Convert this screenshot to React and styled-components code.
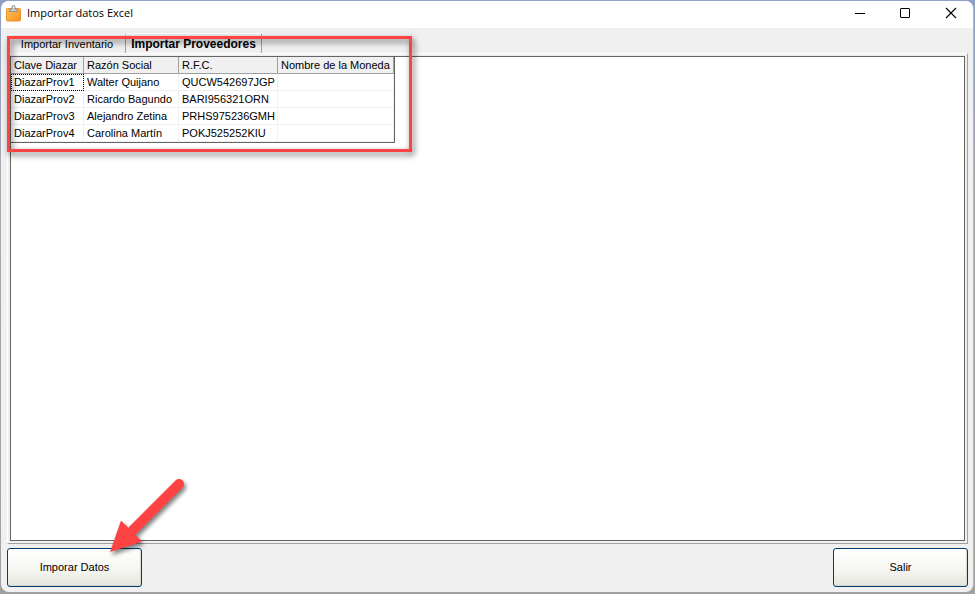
import { useState } from "react";
import styled, { createGlobalStyle } from "styled-components";

const GlobalStyle = createGlobalStyle`
  * {
    box-sizing: border-box;
  }

  body {
    margin: 0;
    font-family: "Liberation Sans", Arial, sans-serif;
    font-size: 11px;
    color: #000;
  }
`;

const Desktop = styled.div`
  display: flex;
  min-height: 100vh;
  padding: 1px 1px 2px;
  background: linear-gradient(#8ca0c8, #a8a8b0 30%, #a0a0a0);
`;

const Window = styled.main`
  flex: 1;
  display: flex;
  flex-direction: column;
  border-right: 1px solid #b4b4b4;
  border-radius: 8px;
  background: #f0f0f0;
  overflow: hidden;
`;

const TitleBar = styled.header`
  display: flex;
  align-items: center;
  height: 27px;
  padding: 0 16px 3px 5px;
  background: #fff;
`;

const WindowTitle = styled.h1`
  flex: 1;
  margin: 0 0 0 5px;
  font-family: "Open Sans", "Noto Sans", sans-serif;
  font-size: 11px;
  line-height: 16px;
  font-weight: 400;
`;

const WindowControls = styled.div`
  display: flex;
  gap: 34px;
`;

const ControlButton = styled.button`
  display: flex;
  width: 12px;
  height: 12px;
  padding: 0;
  border: 0;
  background: none;
`;

const Body = styled.div`
  flex: 1;
  display: flex;
  flex-direction: column;
  gap: 4px;
  padding: 5px 5px 5px 6px;
`;

const TabControl = styled.section`
  position: relative;
  flex: 1;
  display: flex;
  flex-direction: column;
`;

const TabList = styled.div`
  display: flex;
  align-items: flex-end;
  height: 20px;
  padding-left: 2px;
`;

const Tab = styled.button`
  width: ${({ $active }) => ($active ? "136px" : "117px")};
  height: ${({ $active }) => ($active ? "20px" : "19px")};
  padding: 0;
  border: 0;
  border-top: 1px solid #fff;
  border-right: 1px solid #a0a0a0;
  border-radius: 2px 2px 0 0;
  background: #f0f0f0;
  color: #000;
  font-family: inherit;
  font-size: ${({ $active }) => ($active ? "12px" : "11px")};
  line-height: 16px;
  font-weight: ${({ $active }) => ($active ? 700 : 400)};
  white-space: nowrap;
`;

const TabPage = styled.div`
  flex: 1;
  display: flex;
  padding: 2px;
  border: 1px solid;
  border-color: #fff #a0a0a0 #a0a0a0 #fff;
`;

const GridFrame = styled.div`
  flex: 1;
  border: 1px solid #646464;
  background: #fff;
`;

const Grid = styled.table`
  width: 384px;
  table-layout: fixed;
  border-collapse: separate;
  border-spacing: 0;
  border-right: 1px solid #646464;
  border-bottom: 1px solid #646464;
`;

const HeaderCell = styled.th`
  width: ${({ $width }) => $width};
  height: 17px;
  padding: 0 0 0 3px;
  border-right: 1px solid #a0a0a0;
  border-bottom: 1px solid #a0a0a0;
  background: #f0f0f0;
  font-weight: 400;
  line-height: 16px;
  text-align: left;
  white-space: nowrap;
`;

const Cell = styled.td`
  height: 17px;
  padding: 0 0 0 3px;
  border-right: 1px solid #f0f0f0;
  border-bottom: 1px solid #f0f0f0;
  outline: ${({ $focused }) => ($focused ? "1px dotted #000" : "none")};
  outline-offset: -1px;
  line-height: 16px;
  white-space: nowrap;
`;

const Footer = styled.footer`
  position: relative;
  display: flex;
  justify-content: space-between;
`;

const ActionButton = styled.button`
  width: 135px;
  height: 39px;
  padding: 0 0 2px;
  border: 1px solid #003c74;
  border-radius: 3px;
  background: linear-gradient(#fff, #f4f4f0 60%, #e6e6de);
  box-shadow: inset -1px -1px 1px #d8d8cc;
  color: #000;
  font-family: inherit;
  font-size: 11px;
  line-height: 16px;
`;

const Highlight = styled.div`
  position: absolute;
  top: 3px;
  left: 0;
  width: 405px;
  height: 116px;
  border: 3px solid #ff4343;
  filter: drop-shadow(2px 3px 3px rgba(0, 0, 0, 0.6));
  pointer-events: none;
`;

const Arrow = styled.svg`
  position: absolute;
  left: 93px;
  bottom: 27px;
  width: 100px;
  height: 90px;
  filter: drop-shadow(2px 3px 2px rgba(0, 0, 0, 0.5));
  pointer-events: none;
`;

const columns = [
  { title: "Clave Diazar", width: "73px" },
  { title: "Razón Social", width: "95px" },
  { title: "R.F.C.", width: "99px" },
  { title: "Nombre de la Moneda", width: "116px" },
];

const providers = [
  ["DiazarProv1", "Walter Quijano", "QUCW542697JGP", ""],
  ["DiazarProv2", "Ricardo Bagundo", "BARI956321ORN", ""],
  ["DiazarProv3", "Alejandro Zetina", "PRHS975236GMH", ""],
  ["DiazarProv4", "Carolina Martín", "POKJ525252KIU", ""],
];

const tabs = ["Importar Inventario", "Importar Proveedores"];

const ClipboardIcon = () => (
  <svg width="16" height="17" viewBox="0 0 16 17" aria-hidden="true">
    <defs>
      <linearGradient id="board" x1="0" y1="0" x2="1" y2="1">
        <stop offset="0" stopColor="#ffc55a" />
        <stop offset="1" stopColor="#f98f22" />
      </linearGradient>
    </defs>
    <rect x="0.5" y="3.5" width="14" height="12.5" rx="1" fill="url(#board)" stroke="#e8922c" />
    <path d="M3.5 6.5V5L6 4V2Q6 0.5 7.5 0.5T9 2V4L11.5 5V6.5Z" fill="#c9cdd2" stroke="#7d8288" strokeWidth="0.8" />
    <circle cx="7.5" cy="2.3" r="0.8" fill="#fff" />
  </svg>
);

const App = () => {
  const [activeTab, setActiveTab] = useState(1);

  return (
    <>
      <GlobalStyle />
      <Desktop>
        <Window>
          <TitleBar>
            <ClipboardIcon />
            <WindowTitle>Importar datos Excel</WindowTitle>
            <WindowControls>
              <ControlButton aria-label="Minimizar">
                <svg width="12" height="12" viewBox="0 0 12 12">
                  <path d="M2 6.5H12" stroke="#000" />
                </svg>
              </ControlButton>
              <ControlButton aria-label="Maximizar">
                <svg width="12" height="12" viewBox="0 0 12 12">
                  <rect x="1.5" y="1.5" width="9" height="9" rx="0.5" fill="none" stroke="#000" />
                </svg>
              </ControlButton>
              <ControlButton aria-label="Cerrar">
                <svg width="12" height="12" viewBox="0 0 12 12">
                  <path d="M1 1L11 11M11 1L1 11" stroke="#000" strokeWidth="1.1" />
                </svg>
              </ControlButton>
            </WindowControls>
          </TitleBar>

          <Body>
            <TabControl>
              <TabList role="tablist">
                {tabs.map((tab, index) => (
                  <Tab
                    key={tab}
                    role="tab"
                    aria-selected={activeTab === index}
                    $active={activeTab === index}
                    onClick={() => setActiveTab(index)}
                  >
                    {tab}
                  </Tab>
                ))}
              </TabList>
              <TabPage role="tabpanel">
                <GridFrame>
                  <Grid>
                    <thead>
                      <tr>
                        {columns.map(({ title, width }) => (
                          <HeaderCell key={title} $width={width}>
                            {title}
                          </HeaderCell>
                        ))}
                      </tr>
                    </thead>
                    <tbody>
                      {providers.map((provider, row) => (
                        <tr key={provider[0]}>
                          {provider.map((value, col) => (
                            <Cell key={col} $focused={row === 0 && col === 0}>
                              {value}
                            </Cell>
                          ))}
                        </tr>
                      ))}
                    </tbody>
                  </Grid>
                </GridFrame>
              </TabPage>
              <Highlight />
            </TabControl>

            <Footer>
              <ActionButton>Imporar Datos</ActionButton>
              <ActionButton>Salir</ActionButton>
              <Arrow viewBox="0 0 100 90" aria-hidden="true">
                <path d="M79 14L33 60" stroke="#ff4343" strokeWidth="10" strokeLinecap="round" />
                <path d="M10 82L21 50.5L42 71.5Z" fill="#ff4343" />
              </Arrow>
            </Footer>
          </Body>
        </Window>
      </Desktop>
    </>
  );
};

export default App;
